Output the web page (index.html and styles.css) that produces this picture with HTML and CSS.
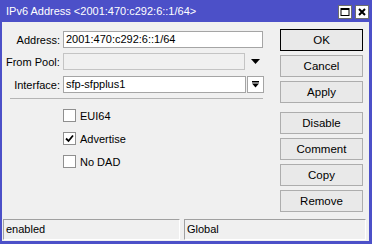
FILE: index.html
```html
<!DOCTYPE html>
<html>
<head>
<meta charset="utf-8">
<link rel="stylesheet" href="styles.css">
</head>
<body>
<div class="window">
  <div class="titlebar">
    <span class="title">IPv6 Address &lt;2001:470:c292:6::1/64&gt;</span>
    <div class="tbtns">
      <span class="tbtn"><svg width="12" height="12" viewBox="0 0 12 12"><rect x="2" y="2.5" width="8" height="7" fill="none" stroke="#000" stroke-width="1"/><rect x="2" y="2" width="8" height="2" fill="#000"/></svg></span>
      <span class="tbtn"><svg width="12" height="12" viewBox="0 0 12 12"><path d="M3 3 L9 9 M9 3 L3 9" stroke="#000" stroke-width="2"/></svg></span>
    </div>
  </div>
  <div class="client">
    <div class="main">
      <div class="form">
        <div class="row">
          <label class="lbl">Address:</label>
          <div class="input wide">2001:470:c292:6::1/64</div>
        </div>
        <div class="row">
          <label class="lbl">From Pool:</label>
          <div class="input disabled"></div>
          <span class="dd"><svg width="9" height="5" viewBox="0 0 9 5"><path d="M0 0 H9 L4.5 5 Z" fill="#000"/></svg></span>
        </div>
        <div class="row">
          <label class="lbl">Interface:</label>
          <div class="input">sfp-sfpplus1</div>
          <span class="ddbtn"><svg width="7" height="7" viewBox="0 0 7 7"><rect x="0" y="0" width="7" height="1.5" fill="#000"/><path d="M0 2.5 H7 L3.5 6.5 Z" fill="#000"/></svg></span>
        </div>
        <div class="sep"></div>
        <div class="checks">
          <div class="check"><span class="box"></span><span>EUI64</span></div>
          <div class="check"><span class="box"><svg width="9" height="9" viewBox="0 0 9 9"><path d="M1 4.5 L3.5 7 L8 1.5" fill="none" stroke="#000" stroke-width="1.8"/></svg></span><span>Advertise</span></div>
          <div class="check"><span class="box"></span><span>No DAD</span></div>
        </div>
      </div>
      <div class="buttons">
        <div class="btn default">OK</div>
        <div class="btn">Cancel</div>
        <div class="btn">Apply</div>
        <div class="btn gap">Disable</div>
        <div class="btn">Comment</div>
        <div class="btn">Copy</div>
        <div class="btn">Remove</div>
      </div>
    </div>
    <div class="status">
      <div class="cell left">enabled</div>
      <div class="cell right">Global</div>
    </div>
  </div>
</div>
</body>
</html>
```

FILE: styles.css
```css
* { box-sizing: border-box; }
html, body { margin: 0; padding: 0; }
body {
  font-family: "Liberation Sans", Arial, sans-serif;
  font-size: 11px;
  color: #000;
  background: #4c50c8;
}
.window {
  width: 372px;
  height: 244px;
  background: #4c50c8;
  border-left: 2px solid #4c50c8;
  border-right: 3px solid #4c50c8;
  border-bottom: 3px solid #4c50c8;
  display: flex;
  flex-direction: column;
}
.titlebar {
  height: 22px;
  display: flex;
  align-items: center;
  justify-content: space-between;
  padding-left: 4px;
}
.title {
  color: #fff;
  font-size: 11px;
  margin-top: -1px;
}
.tbtns {
  display: flex;
  gap: 3px;
  margin-right: 0;
  margin-top: 2px;
}
.tbtn {
  width: 14px;
  height: 14px;
  background: #fff;
  border: 1px solid #6d6d6d;
  display: flex;
  align-items: center;
  justify-content: center;
}
.client {
  flex: 1;
  background: #f0f0f0;
  display: flex;
  flex-direction: column;
}
.main {
  display: flex;
  flex: 1;
}
.form {
  width: 262px;
  padding-top: 9px;
}
.row {
  display: flex;
  align-items: center;
  height: 17px;
  margin-bottom: 5px;
}
.row:nth-child(2) { margin-bottom: 6px; }
.lbl {
  width: 59px;
  text-align: right;
  padding-right: 1px;
  margin-right: 2px;
}
.input {
  width: 183px;
  height: 17px;
  border: 1px solid #a5a5a5;
  background: #fff;
  padding-left: 2px;
  line-height: 15px;
  white-space: nowrap;
}
.input.wide { width: 200px; }
.input.disabled {
  background: #f0f0f0;
  border-color: #c4c4c4;
}
.dd {
  width: 17px;
  height: 17px;
  display: flex;
  align-items: center;
  justify-content: center;
  margin-left: 2px;
}
.ddbtn {
  width: 17px;
  height: 17px;
  border: 1px solid #a5a5a5;
  background: #fff;
  margin-left: 1px;
  display: flex;
  align-items: center;
  justify-content: center;
}
.sep {
  margin-left: 8px;
  width: 253px;
  height: 1px;
  background: #b4b4b4;
  margin-top: 1px;
}
.checks {
  padding-left: 61px;
  padding-top: 10px;
  display: flex;
  flex-direction: column;
  gap: 10px;
}
.check {
  display: flex;
  align-items: center;
  height: 13px;
  gap: 4px;
}
.box {
  width: 13px;
  height: 13px;
  border: 1px solid #8f8f8f;
  background: #fff;
  display: flex;
  align-items: center;
  justify-content: center;
}
.buttons {
  margin-left: 16px;
  padding-top: 7px;
  display: flex;
  flex-direction: column;
  gap: 4px;
}
.btn {
  width: 83px;
  height: 22px;
  border: 1px solid #adadad;
  background: #e9e9e9;
  text-align: center;
  line-height: 20px;
  font-size: 11.5px;
}
.btn.default { border-color: #000; }
.btn.gap { margin-top: 5px; }
.status {
  display: flex;
  gap: 4px;
  padding: 0 3px 1px 1px;
  height: 22px;
}
.cell {
  height: 21px;
  border-top: 1px solid #a0a0a0;
  border-left: 1px solid #a0a0a0;
  border-right: 1px solid #fff;
  border-bottom: 1px solid #fff;
  line-height: 19px;
  padding-left: 2px;
}
.cell.left { width: 177px; }
.cell.right { flex: 1; }
```
